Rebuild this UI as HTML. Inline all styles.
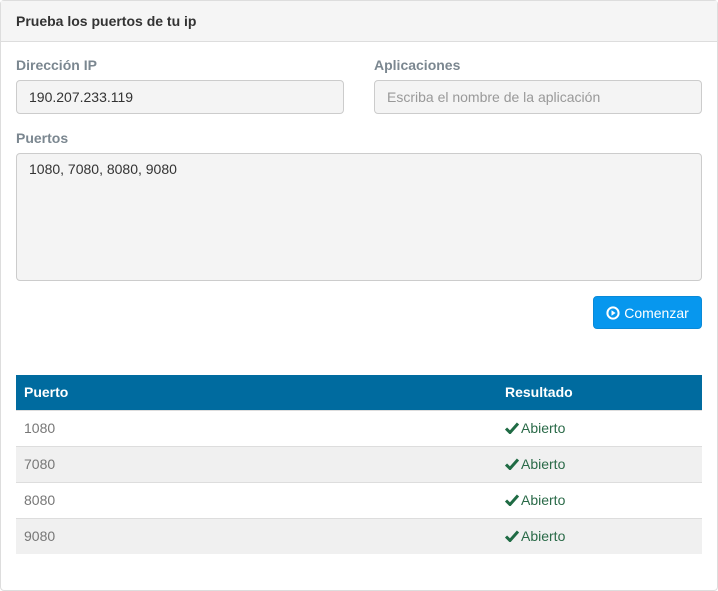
<!DOCTYPE html>
<html><head><style>
*{box-sizing:border-box;margin:0;padding:0}
body{width:718px;height:591px;background:#fff;font-family:"Liberation Sans",sans-serif;font-size:14px;color:#333;position:relative;overflow:hidden}
.panel{position:absolute;left:0;top:0;width:718px;height:591px;border:1px solid #ddd;border-radius:4px}
.head{height:41px;background:#f5f5f5;border-bottom:1px solid #ddd;padding:12px 15px;font-weight:bold;font-size:14px;color:#333}
.lbl{position:absolute;font-weight:bold;color:#7b8790;font-size:14px}
.inp{position:absolute;background:#f4f4f4;border:1px solid #ccc;border-radius:4px;padding:0 12px;font-size:14px;color:#333}
.btn{position:absolute;left:593px;top:296px;width:109px;height:33px;background:#0797ee;border:1px solid #0a8ad8;border-radius:4px;color:#fff;font-size:14px;display:flex;align-items:center;justify-content:center;gap:4px}
table{position:absolute;left:16px;top:375px;width:686px;border-collapse:collapse}
th{background:#006b9f;color:#fff;text-align:left;height:35px;padding:0 8px;font-size:14px}
td{height:36px;padding:0 8px;color:#777;border-top:1px solid #ddd}
tr.s td{background:#f0f0f0}
td.r{color:#2a6a48}
td.r svg{vertical-align:-1px;margin-right:2px}
</style></head><body>
<div class="panel">
<div class="head">Prueba los puertos de tu ip</div>
</div>
<div class="lbl" style="left:16px;top:57px">Dirección IP</div>
<div class="inp" style="left:16px;top:80px;width:328px;height:34px;line-height:32px">190.207.233.119</div>
<div class="lbl" style="left:374px;top:57px">Aplicaciones</div>
<div class="inp" style="left:374px;top:80px;width:328px;height:34px;line-height:32px;color:#999">Escriba el nombre de la aplicación</div>
<div class="lbl" style="left:16px;top:130px">Puertos</div>
<div class="inp" style="left:16px;top:153px;width:686px;height:128px;padding-top:7px">1080, 7080, 8080, 9080</div>
<div class="btn"><svg width="14" height="14" viewBox="0 0 14 14"><circle cx="7" cy="7" r="5.6" fill="none" stroke="#fff" stroke-width="2"/><path d="M5.5 4.3L9.6 7 5.5 9.7z" fill="#fff"/></svg>Comenzar</div>
<table>
<tr><th style="width:481px">Puerto</th><th>Resultado</th></tr>
<tr><td>1080</td><td class="r"><svg width="14" height="12" viewBox="0 0 14 12"><path d="M1 6.5L5 10.5 13 1.5" fill="none" stroke="#1f6b44" stroke-width="3"/></svg>Abierto</td></tr>
<tr class="s"><td>7080</td><td class="r"><svg width="14" height="12" viewBox="0 0 14 12"><path d="M1 6.5L5 10.5 13 1.5" fill="none" stroke="#1f6b44" stroke-width="3"/></svg>Abierto</td></tr>
<tr><td>8080</td><td class="r"><svg width="14" height="12" viewBox="0 0 14 12"><path d="M1 6.5L5 10.5 13 1.5" fill="none" stroke="#1f6b44" stroke-width="3"/></svg>Abierto</td></tr>
<tr class="s"><td>9080</td><td class="r"><svg width="14" height="12" viewBox="0 0 14 12"><path d="M1 6.5L5 10.5 13 1.5" fill="none" stroke="#1f6b44" stroke-width="3"/></svg>Abierto</td></tr>
</table>
</body></html>
